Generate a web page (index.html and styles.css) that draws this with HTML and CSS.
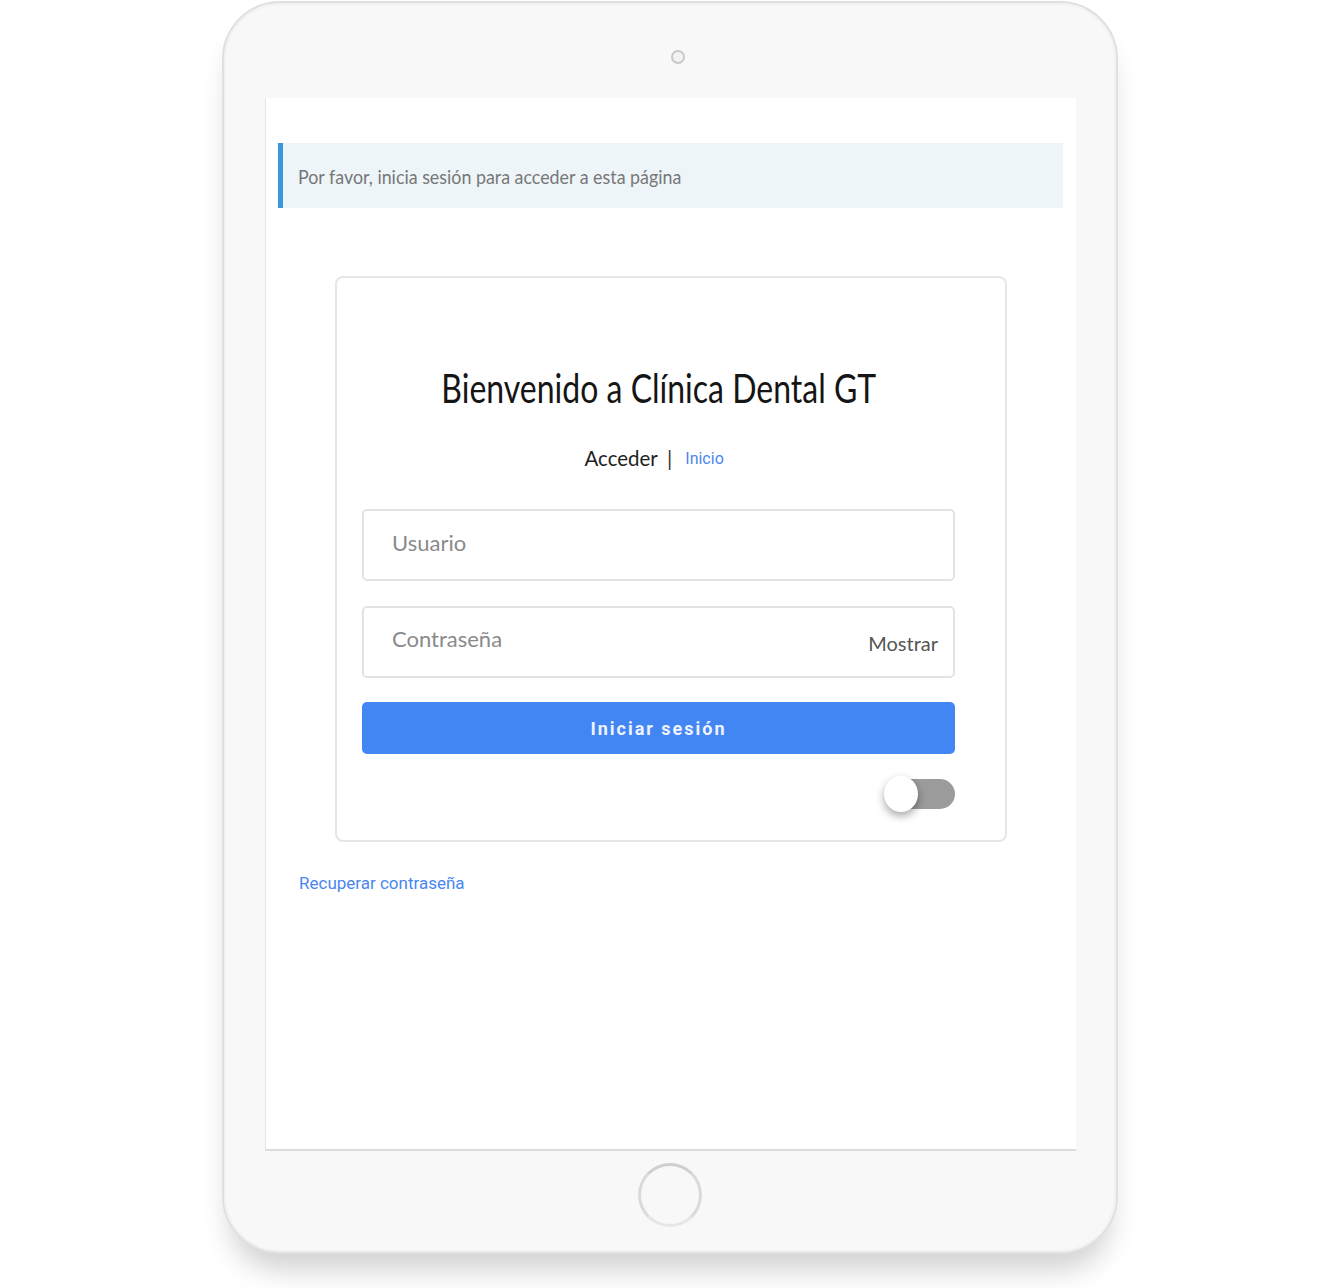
FILE: index.html
```html
<!DOCTYPE html>
<html lang="es">
<head>
<meta charset="utf-8">
<title>Clínica Dental GT</title>
<link rel="stylesheet" href="styles.css">
</head>
<body>
<div class="stage">
  <div class="tablet">
    <div class="bezel-top"><span class="camera"></span></div>
    <div class="screen">
      <div class="alert"><span class="alert-text">Por favor, inicia sesión para acceder a esta página</span></div>
      <div class="card">
        <h1 class="title"><span class="title-text">Bienvenido a Clínica Dental GT</span></h1>
        <div class="tabs">
          <span class="tab-active">Acceder</span>
          <span class="tab-sep">|</span>
          <a class="tab-link" href="#">Inicio</a>
        </div>
        <div class="field"><span class="placeholder">Usuario</span></div>
        <div class="field field-pass"><span class="placeholder">Contraseña</span><span class="show">Mostrar</span></div>
        <button class="btn">Iniciar sesión</button>
        <div class="toggle-row">
          <div class="toggle"><span class="knob"></span><span class="track"></span></div>
        </div>
      </div>
      <a class="recover" href="#">Recuperar contraseña</a>
    </div>
    <div class="bezel-bottom"><span class="home"></span></div>
  </div>
</div>
</body>
</html>
```

FILE: styles.css
```css
html, body {
  margin: 0;
  padding: 0;
  background: #ffffff;
  width: 1340px;
  height: 1288px;
  overflow: hidden;
}

.stage {
  padding-top: 1px;
  padding-left: 222px;
}

.tablet {
  box-sizing: border-box;
  width: 896px;
  height: 1253px;
  background: #f8f8f8;
  border: 2px solid #e0e0e0;
  border-radius: 58px;
  box-shadow: inset 0 0 0 2px #f2f2f2, 0 24px 28px -8px rgba(0, 0, 0, 0.18);
  display: flex;
  flex-direction: column;
  align-items: flex-start;
}

.bezel-top {
  align-self: stretch;
  height: 95px;
  display: flex;
  justify-content: center;
  align-items: flex-start;
}

.camera {
  box-sizing: border-box;
  width: 14px;
  height: 14px;
  margin-top: 47px;
  margin-left: 16px;
  border-radius: 50%;
  border: 2px solid #c9c9c9;
  background: #f3f3f3;
}

.screen {
  box-sizing: border-box;
  width: 811px;
  height: 1053px;
  margin-left: 41px;
  background: #ffffff;
  border-left: 1px solid #e4e4e4;
  border-bottom: 2px solid #dcdcdc;
  padding: 45px 13px 0 12px;
  display: flex;
  flex-direction: column;
  align-items: flex-start;
  font-family: Lato, "Open Sans", sans-serif;
}

.alert {
  box-sizing: border-box;
  width: 785px;
  height: 65px;
  background: #eef5f9;
  border-left: 5px solid #3a97dc;
  display: flex;
  align-items: center;
  padding-left: 15px;
}

.alert-text {
  font-size: 20px;
  color: #777777;
  display: inline-block;
  white-space: nowrap;
  transform: scaleX(0.892);
  transform-origin: left center;
}

.card {
  box-sizing: border-box;
  width: 672px;
  margin-top: 68px;
  margin-left: 57px;
  border: 2px solid #e6e6e6;
  border-radius: 8px;
  padding: 86px 50px 28px 25px;
  display: flex;
  flex-direction: column;
}

.title {
  margin: 0;
  height: 48px;
  line-height: 48px;
  text-align: center;
  font-size: 40px;
  font-weight: 400;
  color: #151515;
  white-space: nowrap;
}

.title-text {
  display: inline-block;
  transform: scaleX(0.8);
  transform-origin: center center;
}

.tabs {
  margin-top: 30px;
  height: 30px;
  display: flex;
  align-items: center;
  justify-content: center;
  gap: 9px;
  padding-right: 14px;
}

.tab-active {
  font-size: 22px;
  color: #1e1e1e;
  display: inline-block;
  transform: scaleX(0.93);
  transform-origin: right center;
}

.tab-sep {
  font-size: 21px;
  color: #333333;
  margin-right: 4px;
}

.tab-link {
  font-family: Roboto, "Liberation Sans", sans-serif;
  font-size: 16px;
  color: #4a86f0;
  text-decoration: none;
  margin-top: 3px;
}

.field {
  box-sizing: border-box;
  height: 72px;
  margin-top: 37px;
  border: 2px solid #e3e3e3;
  border-radius: 5px;
  padding: 0 15px 0 28px;
  display: flex;
  align-items: center;
  justify-content: space-between;
}

.field-pass {
  margin-top: 25px;
}

.placeholder {
  font-size: 22px;
  color: #8a8a8a;
  margin-top: -6px;
}

.field-pass .placeholder {
  margin-top: -8px;
}

.show {
  font-size: 20px;
  color: #555555;
  margin-top: 2px;
}

.btn {
  margin-top: 24px;
  height: 52px;
  border: none;
  border-radius: 5px;
  background: #4286f4;
  color: #eef3ff;
  font-family: Roboto, "Liberation Sans", sans-serif;
  font-weight: 700;
  font-size: 18px;
  letter-spacing: 2px;
  padding: 0;
}

.toggle-row {
  margin-top: 22px;
  display: flex;
  justify-content: flex-end;
}

.toggle {
  display: flex;
  align-items: center;
  height: 36px;
}

.knob {
  width: 34px;
  height: 36px;
  border-radius: 50%;
  background: #ffffff;
  box-shadow: 0 4px 8px rgba(0, 0, 0, 0.35);
  position: relative;
  z-index: 1;
}

.track {
  width: 58px;
  height: 30px;
  margin-left: -21px;
  border-radius: 15px;
  background: #9b9b9b;
}

.recover {
  margin-top: 31px;
  margin-left: 21px;
  font-family: Roboto, "Liberation Sans", sans-serif;
  font-size: 17px;
  color: #4a86f0;
  text-decoration: none;
}

.bezel-bottom {
  align-self: stretch;
  display: flex;
  justify-content: center;
}

.home {
  box-sizing: border-box;
  width: 64px;
  height: 64px;
  margin-top: 12px;
  border-radius: 50%;
  border: 3px solid #dadada;
  border-top-color: #cfcfcf;
  border-bottom-color: #e6e6e6;
}
```
